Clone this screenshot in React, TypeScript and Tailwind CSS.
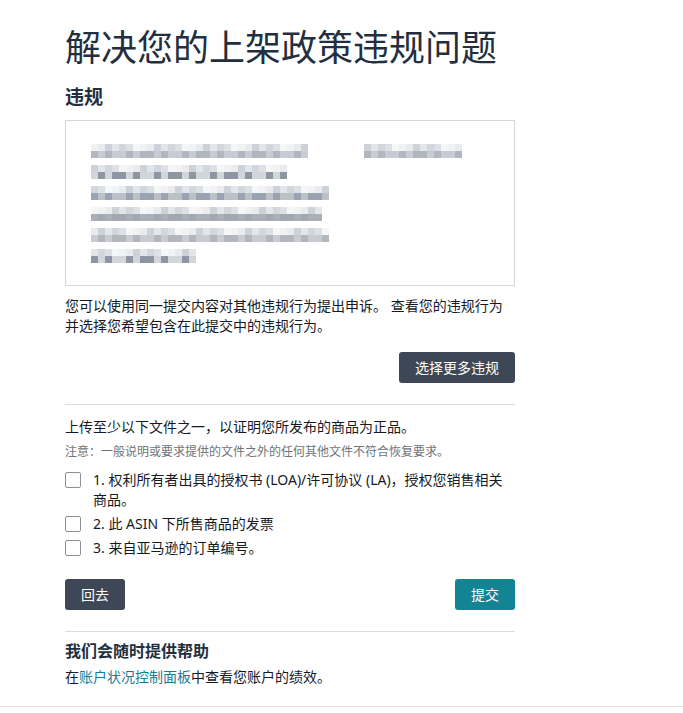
import React from 'react';

const topShades = ['bg-[#dde0e4]', 'bg-[#e9ebee]', 'bg-[#d3d7dd]', 'bg-[#f1f2f4]', 'bg-[#e2e5e9]', 'bg-[#f5f6f7]', 'bg-[#cdd2d9]'];
const bottomShades = ['bg-[#a3a7af]', 'bg-[#bcc0c7]', 'bg-[#8f96a3]', 'bg-[#c8cbd1]', 'bg-[#aab0ba]', 'bg-[#9aa3b1]', 'bg-[#d2d5d9]', 'bg-[#b2b6bd]'];

// blurred (pixelated) placeholder lines, widths in px
const leftLines = [217, 197, 238, 231, 238, 106];

function MosaicLine({ width, seed }: { width: number; seed: number }) {
  const cells = Math.round(width / 7);
  return (
    <div className="flex h-[14px] flex-col">
      <div className="flex h-[7px]">
        {Array.from({ length: cells }).map((_, i) => (
          <span key={i} className={`h-[7px] w-[7px] ${topShades[(i * 5 + seed * 3) % topShades.length]}`} />
        ))}
      </div>
      <div className="flex h-[7px]">
        {Array.from({ length: cells }).map((_, i) => (
          <span key={i} className={`h-[7px] w-[7px] ${bottomShades[(i * 3 + seed * 7 + (i % 4)) % bottomShades.length]}`} />
        ))}
      </div>
    </div>
  );
}

function Checkbox() {
  return <span className="mt-[2px] h-4 w-4 shrink-0 rounded-[2px] border border-[#8d9096] bg-white" />;
}

const items = [
  '1. 权利所有者出具的授权书 (LOA)/许可协议 (LA)，授权您销售相关商品。',
  '2. 此 ASIN 下所售商品的发票',
  '3. 来自亚马逊的订单编号。',
];

export default function App() {
  return (
    <div
      className="min-h-[713px] bg-white text-[#16191f]"
      style={{ fontFamily: '"Noto Sans", "Noto Sans CJK SC", sans-serif' }}
    >
      <div className="border-b border-[#e3e3e3] pb-[19px]">
        <div className="ml-[65px] w-[450px] pt-[27px]">
          <h1 className="text-[36px] font-normal leading-[42px] text-[#232f3e]">解决您的上架政策违规问题</h1>
          <h2 className="mt-[16px] text-[19px] font-bold leading-[24px] text-[#232f3e]">违规</h2>

          {/* violation details box */}
          <div className="mt-[11px] h-[166px] border border-[#d5d5d5] pl-[25px] pt-[23px]">
            <div className="flex">
              <div className="flex w-[273px] flex-col gap-[7px]">
                {leftLines.map((w, i) => (
                  <MosaicLine key={i} width={w} seed={i + 1} />
                ))}
              </div>
              <div>
                <MosaicLine width={98} seed={9} />
              </div>
            </div>
          </div>

          <p className="mt-[10px] text-[14px] leading-[20px]">
            您可以使用同一提交内容对其他违规行为提出申诉。 查看您的违规行为并选择您希望包含在此提交中的违规行为。
          </p>

          <div className="mt-[16px] flex justify-end">
            <button className="h-[31px] rounded-[3px] bg-[#3e4756] px-4 text-[14px] text-white">选择更多违规</button>
          </div>

          <div className="mt-[21px] h-px bg-[#dcdcdc]" />

          <p className="mt-[12px] text-[14px] leading-[20px]">上传至少以下文件之一，以证明您所发布的商品为正品。</p>
          <p className="mt-[6px] text-[12px] leading-[18px] text-[#6f7378]">
            注意：一般说明或要求提供的文件之外的任何其他文件不符合恢复要求。
          </p>

          <div className="mt-[9px] flex flex-col gap-[4px]">
            {items.map((t) => (
              <label key={t} className="flex gap-[12px]">
                <Checkbox />
                <span className="text-[14px] leading-[20px]">{t}</span>
              </label>
            ))}
          </div>

          <div className="mt-[21px] flex justify-between">
            <button className="h-[31px] rounded-[3px] bg-[#3e4756] px-4 text-[14px] text-white">回去</button>
            <button className="h-[31px] rounded-[3px] bg-[#138494] px-4 text-[14px] text-white">提交</button>
          </div>

          <div className="mt-[21px] h-px bg-[#dcdcdc]" />

          <h3 className="mt-[8px] text-[16px] font-bold leading-[22px] text-[#232f3e]">我们会随时提供帮助</h3>
          <p className="mt-[5px] text-[14px] leading-[20px]">
            在<a className="text-[#0f7f90]">账户状况控制面板</a>中查看您账户的绩效。
          </p>
        </div>
      </div>
    </div>
  );
}
